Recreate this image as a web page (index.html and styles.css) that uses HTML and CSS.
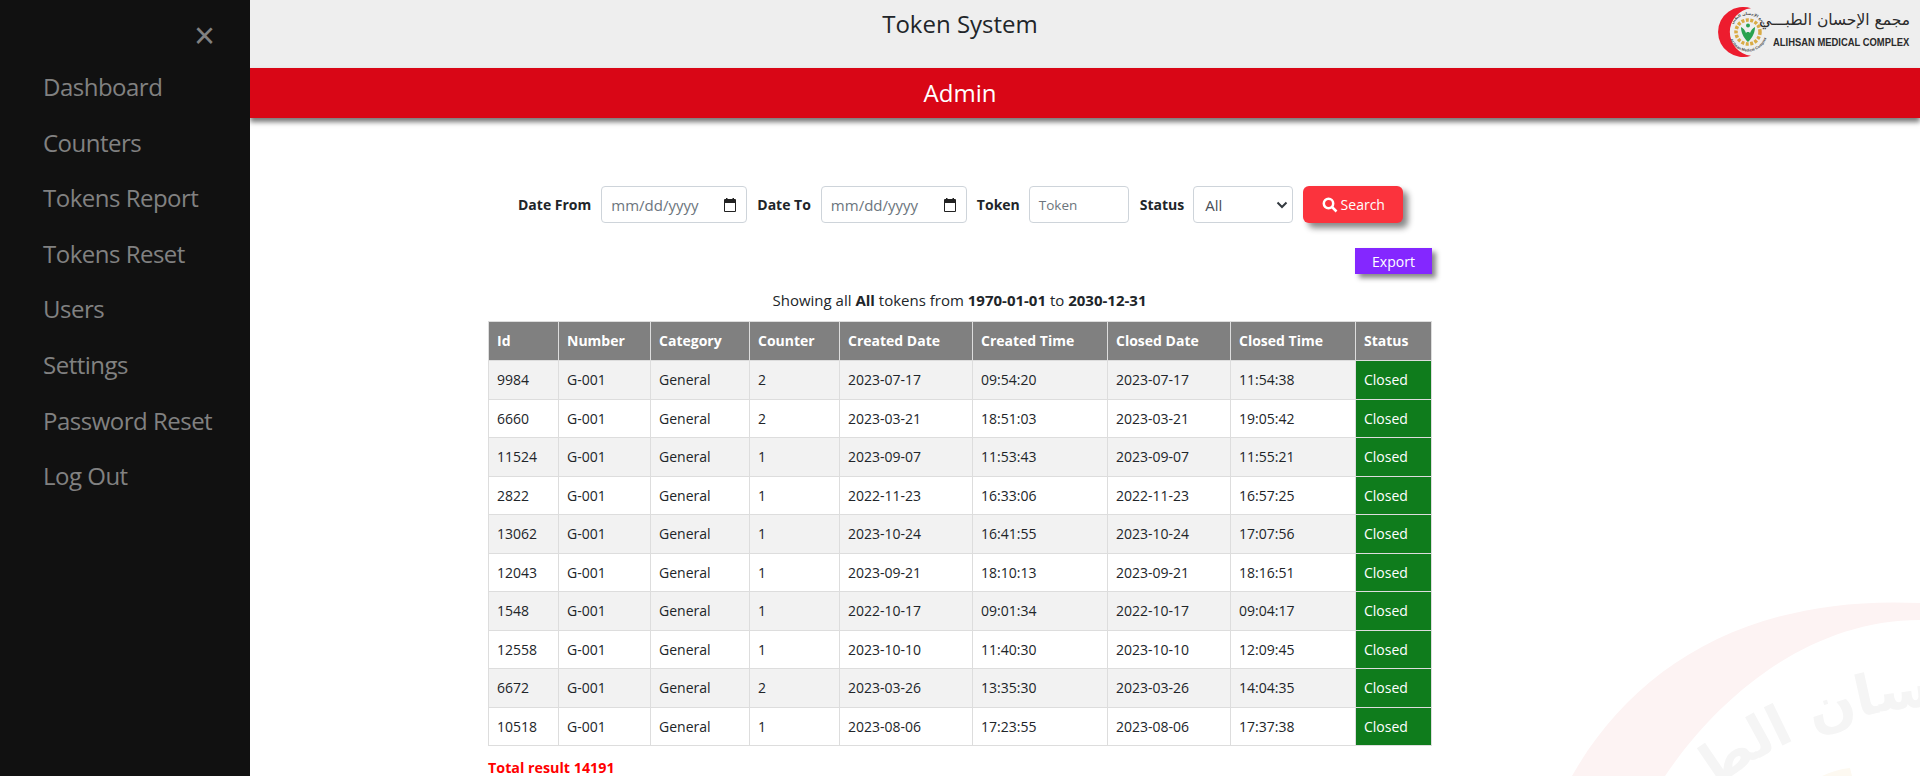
FILE: index.html
```html
<!DOCTYPE html>
<html lang="en">
<head>
<meta charset="utf-8">
<title>Token System</title>
<link rel="stylesheet" href="styles.css">
</head>
<body>
<div class="app">
  <nav class="sidenav">
    <a class="closebtn" href="#">×</a>
    <a class="navlink" href="#">Dashboard</a>
    <a class="navlink" href="#">Counters</a>
    <a class="navlink" href="#">Tokens Report</a>
    <a class="navlink" href="#">Tokens Reset</a>
    <a class="navlink" href="#">Users</a>
    <a class="navlink" href="#">Settings</a>
    <a class="navlink" href="#">Password Reset</a>
    <a class="navlink" href="#">Log Out</a>
  </nav>
  <main class="main">
    <svg class="watermark" viewBox="1550 600 370 176" aria-hidden="true">
      <path class="wm-moon" d="M1572 776C1635 665 1750 595 1920 603L1920 620C1810 620 1720 695 1665 776Z"/>
      <path class="wm-gold" d="M1822 776C1830 772 1840 769 1850 768L1852 776Z"/>
      <defs><path id="wmArc" d="M1650 850C1730 760 1830 705 1960 705L2400 705"/></defs>
      <text class="wm-text"><textPath href="#wmArc" startOffset="10">مجمع الإحسان الطبي</textPath></text>
    </svg>
    <header class="topbar">
      <h1 class="title">Token System</h1>
      <div class="logo">
        <svg class="logo-mark" viewBox="0 0 50 50" aria-hidden="true">
          <defs>
            <path id="sealTop" d="M15 19.200A17 17 0 0 1 47 19.200"/>
            <path id="sealBottom" d="M12.700 31.700A19.500 19.500 0 0 0 49.300 31.700"/>
          </defs>
          <path class="logo-moon" d="M34 1.300A25 25 0 1 0 34 48.700A23.850 23.850 0 0 1 34 1.300Z"/>
          <circle class="logo-wreath" cx="31" cy="25" r="12"/>
          <text class="seal-text seal-ar"><textPath href="#sealTop" startOffset="2">مجمع الإحسان الطبي</textPath></text>
          <text class="seal-text seal-en"><textPath href="#sealBottom" startOffset="1">Al Ihsan Medical Complex</textPath></text>
          <path class="logo-leaf" d="M24 20C26 21 28 23 29 26L30 25L32 25L33 26C34 23 36 21 38 20C38 25 36 30 31 35C26 30 24 25 24 20Z"/>
          <circle class="logo-leaf" cx="31" cy="18.500" r="2"/>
        </svg>
        <div class="logo-text">
          <div class="logo-ar" dir="rtl">مجمع الإحسان الطبـــي</div>
          <div class="logo-en">ALIHSAN MEDICAL COMPLEX</div>
        </div>
      </div>
    </header>
    <div class="rolebar">Admin</div>
    <form class="filters">
      <label class="flabel">Date From</label>
      <div class="input date-input"><span>mm/dd/yyyy</span><svg class="cal" viewBox="0 0 14 14"><path d="M2 1h1V0h1.500v1h5V0H11v1h1a1 1 0 0 1 1 1v11a1 1 0 0 1-1 1H2a1 1 0 0 1-1-1V2a1 1 0 0 1 1-1Zm0 4v8h10V5Z"/></svg></div>
      <label class="flabel">Date To</label>
      <div class="input date-input"><span>mm/dd/yyyy</span><svg class="cal" viewBox="0 0 14 14"><path d="M2 1h1V0h1.500v1h5V0H11v1h1a1 1 0 0 1 1 1v11a1 1 0 0 1-1 1H2a1 1 0 0 1-1-1V2a1 1 0 0 1 1-1Zm0 4v8h10V5Z"/></svg></div>
      <label class="flabel flabel-token">Token</label>
      <div class="input token-input">Token</div>
      <label class="flabel flabel-status">Status</label>
      <div class="input status-input"><span>All</span><svg class="chev" viewBox="0 0 12 8"><path d="M1.500 1.500L6 6l4.500-4.500"/></svg></div>
      <button class="btn-search" type="button"><svg class="mag" viewBox="0 0 16 16"><circle cx="6.500" cy="6.500" r="4.700"/><path d="M10 10l4.500 4.500"/></svg>Search</button>
    </form>
    <div class="content">
      <div class="export-row"><button class="btn-export" type="button">Export</button></div>
      <p class="summary">Showing all <b>All</b> tokens from <b>1970-01-01</b> to <b>2030-12-31</b></p>
      <table class="tokens">
        <colgroup><col class="c1"><col class="c2"><col class="c3"><col class="c4"><col class="c5"><col class="c6"><col class="c7"><col class="c8"><col class="c9"></colgroup>
        <thead><tr><th>Id</th><th>Number</th><th>Category</th><th>Counter</th><th>Created Date</th><th>Created Time</th><th>Closed Date</th><th>Closed Time</th><th>Status</th></tr></thead>
        <tbody>
          <tr><td>9984</td><td>G-001</td><td>General</td><td>2</td><td>2023-07-17</td><td>09:54:20</td><td>2023-07-17</td><td>11:54:38</td><td class="closed">Closed</td></tr>
          <tr><td>6660</td><td>G-001</td><td>General</td><td>2</td><td>2023-03-21</td><td>18:51:03</td><td>2023-03-21</td><td>19:05:42</td><td class="closed">Closed</td></tr>
          <tr><td>11524</td><td>G-001</td><td>General</td><td>1</td><td>2023-09-07</td><td>11:53:43</td><td>2023-09-07</td><td>11:55:21</td><td class="closed">Closed</td></tr>
          <tr><td>2822</td><td>G-001</td><td>General</td><td>1</td><td>2022-11-23</td><td>16:33:06</td><td>2022-11-23</td><td>16:57:25</td><td class="closed">Closed</td></tr>
          <tr><td>13062</td><td>G-001</td><td>General</td><td>1</td><td>2023-10-24</td><td>16:41:55</td><td>2023-10-24</td><td>17:07:56</td><td class="closed">Closed</td></tr>
          <tr><td>12043</td><td>G-001</td><td>General</td><td>1</td><td>2023-09-21</td><td>18:10:13</td><td>2023-09-21</td><td>18:16:51</td><td class="closed">Closed</td></tr>
          <tr><td>1548</td><td>G-001</td><td>General</td><td>1</td><td>2022-10-17</td><td>09:01:34</td><td>2022-10-17</td><td>09:04:17</td><td class="closed">Closed</td></tr>
          <tr><td>12558</td><td>G-001</td><td>General</td><td>1</td><td>2023-10-10</td><td>11:40:30</td><td>2023-10-10</td><td>12:09:45</td><td class="closed">Closed</td></tr>
          <tr><td>6672</td><td>G-001</td><td>General</td><td>2</td><td>2023-03-26</td><td>13:35:30</td><td>2023-03-26</td><td>14:04:35</td><td class="closed">Closed</td></tr>
          <tr><td>10518</td><td>G-001</td><td>General</td><td>1</td><td>2023-08-06</td><td>17:23:55</td><td>2023-08-06</td><td>17:37:38</td><td class="closed">Closed</td></tr>
        </tbody>
      </table>
      <p class="total">Total result 14191</p>
    </div>
  </main>
</div>
</body>
</html>
```

FILE: styles.css
```css
* { box-sizing: border-box; }
html, body { margin: 0; height: 776px; overflow: hidden; background: #fff; }
body { font-family: "Open Sans", "Noto Sans", sans-serif; color: #212529; font-size: 14px; }
.app { display: flex; height: 776px; }

.sidenav { width: 250px; flex: none; background: #111; padding-top: 59px; display: flex; flex-direction: column; position: relative; }
.navlink { display: block; height: 55.6px; line-height: 55.6px; padding-left: 43px; font-size: 24px; color: #818181; text-decoration: none; letter-spacing: -.5px; }
.closebtn { position: absolute; top: 16px; right: 35px; font-size: 36px; line-height: 40px; color: #818181; text-decoration: none; font-family: "Liberation Sans", sans-serif; }

.main { flex: 1; position: relative; overflow: hidden; min-width: 0; }
.watermark { position: absolute; left: 1300px; top: 600px; width: 370px; height: 176px; }
.wm-moon { fill: #fdf3f3; }
.wm-gold { fill: #fdf9f1; }
.wm-text { font-family: "DejaVu Sans", sans-serif; font-size: 56px; font-weight: 700; fill: #f5f5f5; }

.topbar { height: 68px; background: #eee; position: relative; }
.title { margin: 0; padding: 8px 250px 0 0; font-size: 24px; font-weight: 500; line-height: 32px; text-align: center; color: #212529; }
.logo { position: absolute; left: 1467px; top: 7px; display: flex; align-items: flex-start; }
.logo-mark { width: 50px; height: 50px; flex: none; }
.logo-moon { fill: #ed1c2e; }
.logo-wreath { fill: none; stroke: #d9ab45; stroke-width: 3.500; stroke-dasharray: 3 1.500; }
.seal-text { fill: #444; font-weight: 700; }
.seal-ar { font-family: "DejaVu Sans", sans-serif; font-size: 3.800px; }
.seal-en { font-family: "Liberation Sans", sans-serif; font-size: 3.800px; }
.logo-leaf { fill: #2aa24f; }
.logo-text { margin-left: 6px; width: 137px; color: #2b2b2b; }
.logo-ar { font-family: "DejaVu Sans", sans-serif; font-size: 15.500px; line-height: 22px; margin-top: 2px; white-space: nowrap; text-align: right; }
.logo-en { font-family: "Liberation Sans", sans-serif; font-size: 11px; font-weight: 700; line-height: 14px; margin-top: 4px; white-space: nowrap; transform: scaleX(.855); transform-origin: left center; }

.rolebar { height: 50px; background: #d90616; color: #fff; font-size: 24px; line-height: 50px; text-align: center; padding-right: 250px; box-shadow: 0 4px 5px #777; position: relative; }

.filters { display: flex; align-items: center; margin: 68px 0 0 268px; height: 37px; position: relative; }
.flabel { font-weight: 700; font-size: 14px; margin-right: 10px; white-space: nowrap; }
.flabel-token { margin-right: 9px; }
.flabel-status { margin-right: 9px; }
.input { height: 37px; border: 1px solid #ced4da; border-radius: 4px; background: #fff; color: #6c757d; font-size: 15px; display: flex; align-items: center; padding: 0 9px; margin-right: 11px; }
.date-input { width: 146px; justify-content: space-between; margin-right: 10px; }
.token-input { width: 100px; font-size: 13.500px; }
.status-input { width: 100px; justify-content: space-between; color: #495057; padding: 0 4px 0 11px; }
.cal { width: 14px; height: 14px; fill: #222; }
.chev { width: 12px; height: 8px; fill: none; stroke: #343a40; stroke-width: 2; }
.btn-search { height: 37px; width: 100px; border: 0; border-radius: 6px; background: #fb333d; color: #fff; font: inherit; display: flex; align-items: center; justify-content: center; box-shadow: 5px 5px 6px #888; margin-left: -1px; }
.mag { width: 16px; height: 16px; margin-right: 3px; fill: none; stroke: #fff; stroke-width: 2.500; }

.content { margin-left: 238px; width: 943px; position: relative; }
.export-row { display: flex; justify-content: flex-end; margin: 25px -1px 0 0; }
.btn-export { width: 77px; height: 26px; border: 0; background: #8427ff; color: #fff; font: inherit; box-shadow: 4px 4px 5px #888; padding: 0; }
.summary { margin: 14px 0 0; height: 24px; line-height: 24px; text-align: center; font-size: 15px; }
.tokens { border-collapse: collapse; table-layout: fixed; width: 943px; margin-top: 9px; font-size: 14px; }
.c1 { width: 70px; } .c2 { width: 92px; } .c3 { width: 99px; } .c4 { width: 90px; } .c5 { width: 133px; }
.c6 { width: 135px; } .c7 { width: 123px; } .c8 { width: 125px; } .c9 { width: 76px; }
.tokens th, .tokens td { border: 1px solid #ddd; padding: 0 8px; text-align: left; white-space: nowrap; font-weight: 400; }
.tokens th { height: 39px; background: #808080; color: #fff; font-weight: 700; padding-bottom: 2px; }
.tokens td { height: 38.500px; }
.tokens tbody tr:nth-child(odd) td { background: #f2f2f2; }
.tokens tbody tr td.closed { background: #0f7c1c; color: #fff; }
.total { margin: 12px 0 0; color: #f00; font-weight: 700; font-size: 14.300px; line-height: 20px; }
```
